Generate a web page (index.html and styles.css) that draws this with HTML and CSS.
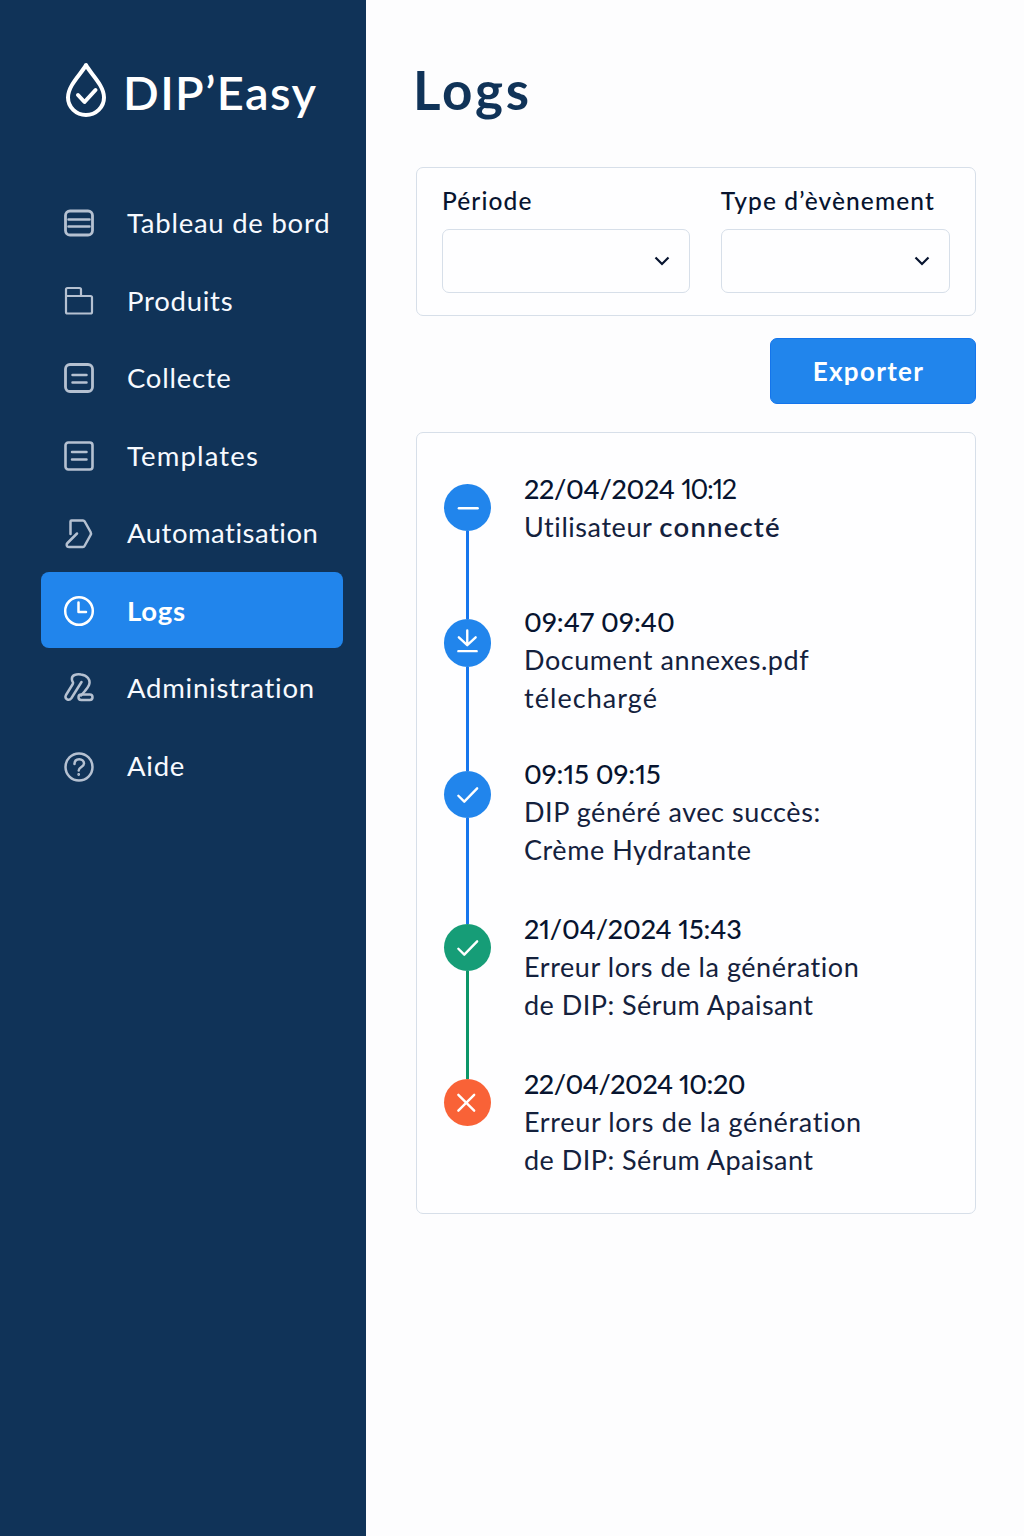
FILE: index.html
```html
<!DOCTYPE html>
<html lang="fr">
<head>
<meta charset="utf-8">
<title>DIP’Easy – Logs</title>
<link rel="stylesheet" href="styles.css">
</head>
<body>
<div class="app">
  <aside class="sidebar">
    <div class="brand">
      <svg class="brand-mark" width="44" height="58" viewBox="0 0 44 58" fill="none" stroke="#fff" stroke-width="4" stroke-linejoin="round" stroke-linecap="round"><path d="M22 3C18 11 4 23 4 35.500a18 17.500 0 0 0 36 0C40 23 26 11 22 3Z"/><path d="M14 33l6.500 7L31.500 28"/></svg>
      <span class="brand-name">DIP’Easy</span>
    </div>
    <nav class="nav">
      <a class="nav-item"><svg class="nav-icon" viewBox="0 0 32 32"><rect x="2.500" y="4" width="27" height="24" rx="4.500" stroke-width="2.800"/><path d="M5.500 12.500h21M5.500 19.500h21"/></svg><span class="nav-label">Tableau de bord</span></a>
      <a class="nav-item"><svg class="nav-icon" viewBox="0 0 32 32"><path stroke-width="2.200" d="M3 11V4.500Q3 3 4.500 3h12Q18 3 18 4.500V11M3 11h24.500q1.500 0 1.500 1.500v14.500q0 1.500-1.500 1.500h-23Q3 28.500 3 27Z"/></svg><span class="nav-label">Produits</span></a>
      <a class="nav-item"><svg class="nav-icon" viewBox="0 0 32 32"><rect x="2.500" y="2.500" width="27" height="27" rx="4.500" stroke-width="2.800"/><path d="M9.500 13h14M9.500 20.500h14"/></svg><span class="nav-label">Collecte</span></a>
      <a class="nav-item"><svg class="nav-icon" viewBox="0 0 32 32"><rect x="2.500" y="2.500" width="27" height="27" rx="2.800" stroke-width="2.600"/><path d="M9 12h14.500M9 19.500h14.500"/></svg><span class="nav-label label-wide">Templates</span></a>
      <a class="nav-item"><svg class="nav-icon" viewBox="0 0 32 32"><path d="M7.500 17V4.500Q7.500 3.500 8.500 3.500h11.500Q21 3.500 21.700 4.500L27.600 15q.8 1.500 0 3L21.500 29Q21 30 20 30H6c-2.500 0-3-2.500-1.500-4L14 16.500"/></svg><span class="nav-label label-snug">Automatisation</span></a>
      <a class="nav-item active"><svg class="nav-icon" viewBox="0 0 32 32"><circle cx="16" cy="16" r="13.800"/><path d="M15.500 7.500v9.500h7.500"/></svg><span class="nav-label">Logs</span></a>
      <a class="nav-item nav-admin"><svg class="nav-icon" viewBox="0 0 32 32"><path d="M18.500 10L8.500 26C6 29.500 1 27 3 23L9.500 12.500C11 10 9.500 10.500 9 8 8 2.500 14 2 18 2.500c6 .5 10 5.500 8 10.500-1 2.500-2.500 4-4.500 6.500l-3.500 4"/><rect x="15.500" y="22.500" width="14" height="5.500" rx="2.700"/></svg><span class="nav-label">Administration</span></a>
      <a class="nav-item"><svg class="nav-icon" viewBox="0 0 32 32"><circle cx="16" cy="17" r="13.500"/><path d="M11.500 14c0-3 2-4.800 4.700-4.800s4.800 1.800 4.800 4.300c0 3.500-5.300 3.500-5.300 7"/><circle cx="15.700" cy="24.500" r=".6" stroke-width="1.600"/></svg><span class="nav-label">Aide</span></a>
    </nav>
  </aside>
  <main class="main">
    <h1 class="title">Logs</h1>
    <section class="filters">
      <div class="field field-period">
        <span class="field-label">Période</span>
        <div class="select"><svg width="16" height="10" viewBox="0 0 16 10"><path d="M1.500 1.500L8 8l6.500-6.500"/></svg></div>
      </div>
      <div class="field field-type">
        <span class="field-label">Type d’èvènement</span>
        <div class="select"><svg width="16" height="10" viewBox="0 0 16 10"><path d="M1.500 1.500L8 8l6.500-6.500"/></svg></div>
      </div>
    </section>
    <button class="export">Exporter</button>
    <section class="timeline">
      <article class="event event-login">
        <div class="rail"><i class="link link-none"></i><span class="dot"><svg viewBox="0 0 48 48"><path d="M15 24.500h19"/></svg></span><i class="link grow"></i></div>
        <div class="text"><div class="time">22/04/2024 <span class="hour">10:12</span></div><div class="desc">Utilisateur <b>connecté</b></div></div>
      </article>
      <article class="event event-download">
        <div class="rail"><i class="link"></i><span class="dot"><svg viewBox="0 0 48 48"><path d="M23.500 11.500v14M15 18.500l8.500 8 8.500-8M14.500 32.500h18.500"/></svg></span><i class="link grow"></i></div>
        <div class="text"><div class="time">09:47 09:40</div><div class="desc">Document annexes.pdf<br><span class="loose">télechargé</span></div></div>
      </article>
      <article class="event event-success">
        <div class="rail"><i class="link"></i><span class="dot"><svg viewBox="0 0 48 48"><path d="M14.500 25l6 6L33.500 17.500"/></svg></span><i class="link grow"></i></div>
        <div class="text"><div class="time">09:15 09:15</div><div class="desc">DIP généré avec succès:<br>Crème Hydratante</div></div>
      </article>
      <article class="event event-green">
        <div class="rail"><i class="link"></i><span class="dot dot-green"><svg viewBox="0 0 48 48"><path d="M14.500 25l6 6L33.500 17.500"/></svg></span><i class="link link-green grow"></i></div>
        <div class="text"><div class="time">21/04/2024 15:43</div><div class="desc">Erreur lors de la génération<br><span class="tight">de DIP: Sérum Apaisant</span></div></div>
      </article>
      <article class="event event-error">
        <div class="rail"><i class="link link-green"></i><span class="dot dot-red"><svg viewBox="0 0 48 48"><path d="M14.500 16l16 16M30.500 16l-16 16"/></svg></span></div>
        <div class="text"><div class="time">22/04/2024 10:20</div><div class="desc">Erreur lors de la génération<br><span class="tight">de DIP: Sérum Apaisant</span></div></div>
      </article>
    </section>
  </main>
</div>
</body>
</html>
```

FILE: styles.css
```css
* { box-sizing: border-box; }
body { margin: 0; background: #fdfdfe; font-family: Lato, "Liberation Sans", sans-serif; color: #07142f; }
.app { display: flex; height: 1536px; overflow: hidden; }
.sidebar { width: 366px; flex: none; background: #103358; padding: 62px 0 0; }
.brand { display: flex; align-items: center; gap: 15px; height: 58px; padding-left: 64px; color: #fff; }
.brand-mark { flex: none; }
.brand-name { font-size: 47px; font-weight: 600; line-height: 58px; letter-spacing: 1.400px; white-space: nowrap; padding-top: 2px; }
.nav { display: flex; flex-direction: column; gap: 1.600px; margin: 65px 23px 0 41px; }
.nav-item { display: flex; align-items: center; gap: 33px; height: 76px; padding-left: 22px; border-radius: 8px; color: #f7faff; white-space: nowrap; }
.nav-icon { width: 32px; height: 32px; flex: none; fill: none; stroke: #b5c1d1; stroke-width: 2.500; stroke-linecap: round; stroke-linejoin: round; }
.nav-label { font-size: 27.500px; line-height: 38px; letter-spacing: .750px; margin-left: -1px; }
.label-wide { letter-spacing: 1.150px; }
.label-snug { letter-spacing: .500px; }
.active { margin: -1px 0 1px; padding-top: 2px; background: #2185ec; color: #fff; font-weight: 700; }
.active .nav-icon { stroke: #fff; }
.nav-admin { padding-bottom: 2px; }
.main { flex: 1; display: flex; flex-direction: column; padding: 58px 48px 0 50px; }
.title { margin: 0 0 0 -3px; font-size: 53px; line-height: 64px; font-weight: 700; letter-spacing: 2.800px; color: #103358; }
.filters { display: flex; gap: 31px; height: 149px; margin-top: 45px; padding: 16px 25px 0; background: #fefeff; border: 1px solid #d7dfe9; border-radius: 7px; }
.filters, .timeline { width: 560px; }
.field-period { width: 248px; }
.field-type { width: 229.500px; }
.field-label { display: block; font-size: 24.500px; line-height: 34px; letter-spacing: 1.100px; font-weight: 500; white-space: nowrap; }
.select { display: flex; align-items: center; justify-content: flex-end; height: 64px; margin-top: 11px; padding-right: 19px; border: 1px solid #d7dfe9; border-radius: 7px; }
.select svg { fill: none; stroke: #07142f; stroke-width: 2.200; }
.export { width: 206px; height: 66px; margin: 22px 0 0 354px; padding: 0 9px 0 0; border: 1px solid #1475ec; border-radius: 7px; background: #2185ec; color: #fff; font: 700 26px/38px Lato, "Liberation Sans", sans-serif; letter-spacing: 1.300px; }
.timeline { height: 782px; margin-top: 28px; padding: 37px 27px 0 26.500px; background: #fefeff; border: 1px solid #d7dfe9; border-radius: 7px; }
.event { display: flex; gap: 32.500px; }
.event-login { height: 133px; --lead: 13.500px; --figure-track: -.3px; }
.event-download { height: 152px; --lead: 16px; --figure-track: .1px; }
.event-success { height: 155px; --lead: 15.500px; }
.event-green { height: 155px; --lead: 13.500px; --figure-track: -.15px; }
.event-error { height: 114px; --lead: 13.500px; --figure-track: -.5px; --desc-track: .65px; }
.rail { display: flex; flex-direction: column; align-items: center; width: 48px; flex: none; }
.link { width: 3px; height: var(--lead); background: #1676ed; }
.link-none { background: none; }
.link-green { background: #0b9668; }
.grow { flex: 1; }
.dot { width: 47.500px; height: 47.500px; flex: none; border-radius: 50%; background: #2185ec; }
.dot svg { display: block; fill: none; stroke: #fff; stroke-width: 2.400; stroke-linecap: round; stroke-linejoin: round; }
.dot-green { background: #169d77; }
.dot-red { background: #f96237; }
.text { font-size: 27px; line-height: 38.200px; white-space: nowrap; }
.time { font-weight: 500; font-variant-numeric: proportional-nums; letter-spacing: var(--figure-track, 0); }
.hour { font-weight: 400; letter-spacing: -1.300px; }
.desc { color: #14213d; letter-spacing: var(--desc-track, .56px); }
.desc b { font-size: 27.500px; font-weight: 600; letter-spacing: 1.200px; }
.loose { letter-spacing: 1.050px; }
.tight { letter-spacing: .470px; }
```
